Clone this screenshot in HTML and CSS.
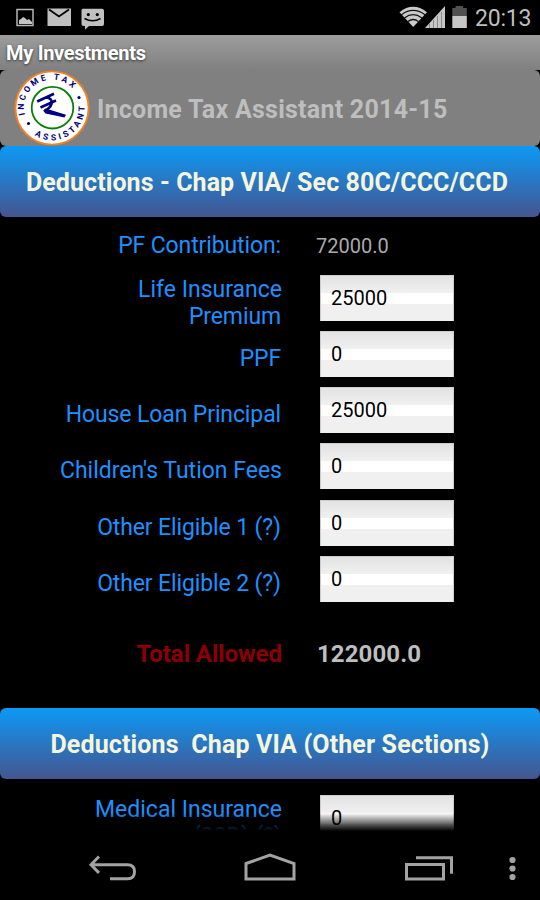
FILE: index.html
```html
<!DOCTYPE html>
<html lang="en">
<head>
<meta charset="utf-8">
<title>My Investments</title>
<link rel="stylesheet" href="styles.css">
</head>
<body>
<div class="phone">
  <header class="status">
    <svg class="status-left" width="110" height="35" viewBox="0 0 110 35">
      <rect x="17" y="9.500" width="16" height="16" fill="none" stroke="#b5b5b5" stroke-width="1.500"/>
      <path d="M19 24v-4l2-1 2-2 2 1 2 2 2-1 3 3v2z" fill="#c4c4c4"/>
      <rect x="47.500" y="8.500" width="23.500" height="17.500" fill="#c0c0c0"/>
      <path d="M49 9.500l10 7 10-7" fill="none" stroke="#000" stroke-width="1.800"/>
      <path d="M83 8.700h19q2 0 2 2V24q0 2-2 2H89l-4 3.700V26h-1.500q-2 0-2-2V10.700q0-2 1.500-2z" fill="#c0c0c0"/>
      <circle cx="88.300" cy="14.600" r="1.600"/><circle cx="97.300" cy="14.600" r="1.600"/>
      <path d="M84.500 18.500q8.300 4.700 16 0" fill="none" stroke="#000" stroke-width="1.500"/>
    </svg>
    <div class="status-right">
      <svg width="70" height="35" viewBox="399 0 70 35">
        <path d="M399.500 12.200Q413 1.500 427 12.200L413.200 27z" fill="#c9c9c9"/>
        <g fill="none" stroke="#151515" stroke-width="1.300">
          <path d="M401.500 14.700Q413 6 425 14.700"/><path d="M404.500 18Q413 11.400 422 18"/><path d="M408 21.500Q413 17.500 418.500 21.500"/>
        </g>
        <path d="M425 28L445 6v22z" fill="#c6c6c6"/>
        <path d="M429.500 24v4M433.500 20v8M437.500 16v12M441.500 12v16" stroke="#8a8a8a" stroke-width="1"/>
        <path d="M452.300 8h3.200V6h7.500v2h3.800v8h-14.500z" fill="#505050"/>
        <rect x="452.300" y="16" width="14.500" height="12" fill="#c6c6c6"/>
      </svg>
      <span class="clock">20:13</span>
    </div>
  </header>
  <div class="titlebar"><span class="title">My Investments</span></div>
  <main class="scroll">
    <div class="brand">
      <svg class="logo" width="76" height="76" viewBox="0 0 76 76">
        <defs>
          <path id="arc-top" d="M10.900 44.800A28 28 0 0 1 60 20.300"/>
          <path id="arc-bottom" d="M20.500 65.200A32.500 32.500 0 0 0 70.400 35"/>
        </defs>
        <circle cx="38" cy="38" r="36.600" fill="#fff" stroke="#f58220" stroke-width="1.900"/>
        <circle cx="38.500" cy="37.700" r="20.800" fill="#fff" stroke="#078007" stroke-width="1.800"/>
        <text class="logo-text"><textPath href="#arc-top" textLength="74">INCOME TAX</textPath></text>
        <text class="logo-text"><textPath href="#arc-bottom" textLength="71">ASSISTANT</textPath></text>
        <circle cx="65" cy="27.500" r="1.600" fill="#000080"/><circle cx="14.500" cy="53.500" r="1.600" fill="#000080"/>
        <path d="M23.200 31.500L40 23.800M26.500 37.500L42 30.500M32 27.500Q38.700 28 37.500 34Q36 38.500 30.500 40.500" fill="none" stroke="#000080" stroke-width="2.600"/>
        <path d="M29 40.500L34 39.300 52 44.800 50.500 47.500 31.500 43.500z" fill="#000080"/>
      </svg>
      <span class="brand-name">Income Tax Assistant 2014-15</span>
    </div>
    <h2 class="banner"><span class="b1">Deductions - Chap VIA/ Sec 80C/CCC/CCD</span></h2>
    <div class="row row-static"><span class="label"><span class="l1">PF Contribution:</span></span><span class="value">72000.0</span></div>
    <div class="row row-double"><span class="label">Life Insurance<br><span class="l1">Premium</span></span><span class="field">25000</span></div>
    <div class="row"><span class="label"><span class="l1">PPF</span></span><span class="field">0</span></div>
    <div class="row"><span class="label"><span class="l1">House Loan Principal</span></span><span class="field">25000</span></div>
    <div class="row"><span class="label">Children's Tution Fees</span><span class="field">0</span></div>
    <div class="row"><span class="label"><span class="l1">Other Eligible 1 (?)</span></span><span class="field">0</span></div>
    <div class="row"><span class="label"><span class="l1">Other Eligible 2 (?)</span></span><span class="field">0</span></div>
    <div class="row row-total"><span class="label">Total Allowed</span><span class="value">122000.0</span></div>
    <h2 class="banner"><span class="b2">Deductions&nbsp; Chap VIA (Other Sections)</span></h2>
    <div class="row row-double row-last"><span class="label">Medical Insurance<br>(80D) (?)</span><span class="field">0</span></div>
  </main>
  <nav class="navbar">
    <svg width="540" height="69" viewBox="0 831 540 69">
      <g fill="none" stroke="#a3a3a3" stroke-width="3">
        <path d="M99 856.500l-8 8.200 8 8.200M92 864.700h35.500q7 0 7 7t-7 7H110"/>
        <path d="M246 863.500l24-8.300 24 8.300V879h-48z"/>
        <path d="M406.500 864.500h37V879h-37zM416 857.700h35.500v16"/>
      </g>
      <g fill="#a3a3a3"><circle cx="512.500" cy="860" r="3.100"/><circle cx="512.500" cy="868.500" r="3.100"/><circle cx="512.500" cy="877" r="3.100"/></g>
    </svg>
  </nav>
</div>
</body>
</html>
```

FILE: styles.css
```css
* { box-sizing: border-box; }
body { margin: 0; background: #000; font-family: Roboto, "Liberation Sans", sans-serif; }
svg { display: block; }
.phone { width: 540px; height: 900px; display: flex; flex-direction: column; overflow: hidden; background: #000; }
.status { height: 35px; display: flex; justify-content: space-between; }
.status-right { display: flex; align-items: center; padding-right: 8px; gap: 6px; }
.clock { font-size: 23px; line-height: 35px; color: #bebebe; padding-top: 1px; width: 57px; letter-spacing: -0.2px; white-space: nowrap; }
.titlebar { height: 35px; padding-left: 6px; background: linear-gradient(#9d9d9d, #808080); }
.title { display: block; font-size: 20px; line-height: 36px; font-weight: 700; letter-spacing: -0.3px; color: #fff; text-shadow: 0 1px 3px #333; }
.scroll { height: 761px; overflow: hidden; position: relative; }
.scroll::after { content: ""; position: absolute; left: 0; right: 0; bottom: 0; height: 18px; background: linear-gradient(transparent, #000); }
.brand { height: 76px; background: #808080; border-radius: 6px; display: flex; align-items: center; padding-left: 14px; }
.brand-name { font-size: 25px; font-weight: 700; color: #bebebe; margin-left: 7px; padding-top: 3px; letter-spacing: 0.25px; white-space: nowrap; }
.logo-text { font-size: 8.500px; font-weight: 700; fill: #000080; }
.banner { margin: 0; height: 70.500px; padding-top: 2px; border-radius: 6px; background: linear-gradient(#0c99f5, #45558f); display: flex; align-items: center; justify-content: center; color: beige; font-size: 25px; white-space: nowrap; }
.b1 { letter-spacing: 0.08px; margin-right: 6px; }
.b2 { letter-spacing: 0.13px; padding-top: 1px; }
.row { height: 56.250px; display: flex; align-items: center; }
.label { width: 282px; padding-top: 9px; text-align: right; font-size: 23px; line-height: 27px; color: #1e90ff; white-space: nowrap; }
.l1 { letter-spacing: -0.12px; margin-right: 1px; }
.field { width: 134px; height: 46px; margin-left: 38px; padding-left: 10px; font-size: 20px; line-height: 45px; color: #000; border: 1px solid #ccc; border-width: 1px 1px 0; background: linear-gradient(#e3e3e3 0, #f0f0f0 17px, #fff 17px, #fff 28px, #f0f0f0 28px); }
.row-static { height: 53px; }
.row-static .label { padding-top: 5px; }
.row-static .value { margin-left: 34px; font-size: 20px; color: #aaa; padding-top: 5px; }
.row-double .label { padding-top: 10px; }
.row-total { height: 101px; padding-bottom: 10px; }
.row-total .label { color: #8b0000; font-size: 24px; font-weight: 700; padding-top: 3px; letter-spacing: -0.05px; }
.row-total .value { margin-left: 35px; padding-top: 3px; font-size: 24px; font-weight: 700; color: #bebebe; letter-spacing: 0.1px; }
.row-last { margin-top: 11px; }
.navbar { height: 69px; }
```
